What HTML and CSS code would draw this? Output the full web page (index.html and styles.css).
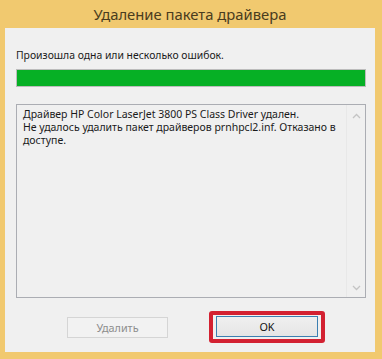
FILE: index.html
```html
<!DOCTYPE html>
<html lang="ru">
<head>
  <meta charset="UTF-8" />
  <title>Удаление пакета драйвера</title>
  <link rel="stylesheet" href="styles.css">
</head>
<body>
  <div class="window">
    <div class="titlebar">Удаление пакета драйвера</div>
    <div class="client">
      <div class="message">Произошла одна или несколько ошибок.</div>
      <div class="progress"><div class="progress-fill"></div></div>
      <div class="log">
        <div class="log-text">Драйвер HP Color LaserJet 3800 PS Class Driver удален.<br>Не удалось удалить пакет драйверов prnhpcl2.inf. Отказано в доступе.</div>
        <div class="scrollbar">
          <svg width="9" height="6" viewBox="0 0 9 6"><path d="M1 5 L4.5 1.5 L8 5" fill="none" stroke="#c4c4c4" stroke-width="1.3"/></svg>
          <svg width="9" height="6" viewBox="0 0 9 6"><path d="M1 1 L4.5 4.5 L8 1" fill="none" stroke="#c4c4c4" stroke-width="1.3"/></svg>
        </div>
      </div>
      <div class="controls">
        <button class="btn" disabled>Удалить</button>
        <span class="highlight"><button class="btn btn-default">OK</button></span>
      </div>
    </div>
  </div>
</body>
</html>
```

FILE: styles.css
```css
:root {
  --font-ui: 'Noto Sans', 'Open Sans', sans-serif;
  --frame: #f1c96f;
  --client: #f0f0f0;
  --text: #1a1a1a;
}
* { box-sizing: border-box; margin: 0; padding: 0; }
body { background: var(--frame); font-family: var(--font-ui); color: var(--text); }
.window {
  width: 382px; height: 359px;
  background: var(--frame);
  padding: 0 7px 7px 5px;
  display: flex; flex-direction: column;
}
.titlebar {
  height: 28px; line-height: 28px;
  text-align: center;
  font-size: 14.8px;
  color: #4a3c1e;
}
.client {
  flex: 1;
  background: var(--client);
  padding: 19px 4px 0 11px;
  display: flex; flex-direction: column;
}
.message { font-size: 10.4px; line-height: 16px; }
.progress {
  margin-top: 6px;
  width: 350px; height: 18px;
  border: 1px solid #bcbcbc;
  background: #e6e6e6;
}
.progress-fill { height: 100%; width: 100%; background: #06b025; }
.log {
  margin-top: 17px;
  width: 350px; height: 194px;
  border: 1px solid #abadb3;
  background: var(--client);
  display: flex;
}
.log-text {
  flex: 1;
  padding: 3px 0 0 6px;
  font-size: 10.5px; line-height: 13px;
}
.scrollbar {
  width: 19px;
  border-left: 1px solid #e8e8e8;
  display: flex; flex-direction: column; justify-content: space-between; align-items: center;
  padding: 8px 0 6px;
}
.controls {
  margin-top: 13px;
  display: flex; align-items: center;
  padding-left: 51px;
  gap: 41px;
}
.btn {
  width: 101px; height: 21px;
  font-family: var(--font-ui); font-size: 10.8px;
  border: 1px solid #adadad;
  background: linear-gradient(#f0f0f0, #e5e5e5);
  color: #111;
}
.btn:disabled { color: #8d8d8d; border-color: #d5d5d5; background: #f2f2f2; }
.btn-default { border-color: #3c7fb1; width: 102px; }
.highlight {
  display: inline-flex;
  padding: 1px 3px 2px;
  border: 4px solid #d32131;
  border-radius: 3px;
}
```
